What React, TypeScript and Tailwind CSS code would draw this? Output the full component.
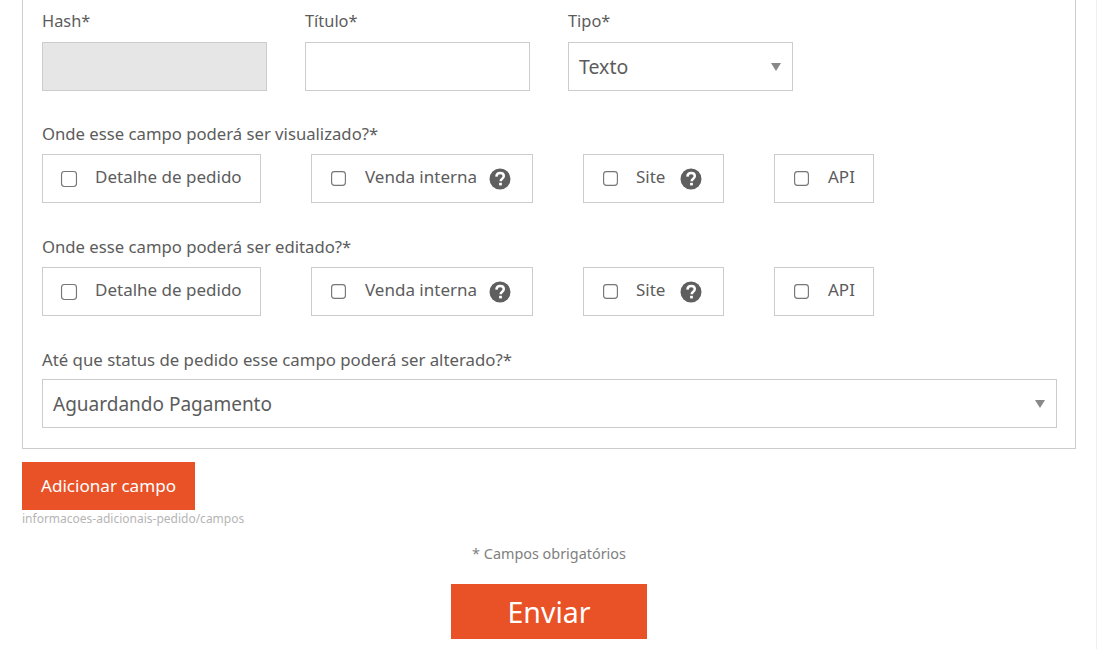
import React from 'react';

const font = { fontFamily: '"Noto Sans", sans-serif' };

function HelpIcon() {
  return (
    <svg viewBox="0 0 22 22" className="w-[22px] h-[22px] shrink-0">
      <circle cx="11" cy="11" r="10.5" fill="#5f5f5f" />
      <path
        d="M7.4 8.6c.1-2.2 1.6-3.6 3.8-3.6 2.1 0 3.6 1.3 3.6 3.1 0 1.4-.8 2.1-1.8 2.8-.8.6-1.2 1-1.2 1.9v.5"
        fill="none"
        stroke="#fff"
        strokeWidth="2.5"
      />
      <rect x="10.1" y="14.8" width="2.8" height="2.6" fill="#fff" />
    </svg>
  );
}

function CheckOption({
  label,
  helpClass,
  className,
  checkClass,
}: {
  label: string;
  helpClass?: string;
  className: string;
  checkClass: string;
}) {
  return (
    <label className={`h-[49px] border border-[#cccccc] flex items-center shrink-0 ${className}`}>
      <input
        type="checkbox"
        className={`appearance-none border border-[#767676] rounded-[3px] bg-white shrink-0 scale-[1.15] ${checkClass}`}
      />
      <span className="pb-[3px] text-[17px] text-[#5c5c5c]">{label}</span>
      {helpClass && <span className={`flex ${helpClass}`}><HelpIcon /></span>}
    </label>
  );
}

function CheckRow({ title }: { title: string }) {
  return (
    <div>
      <p className="text-[16.7px] leading-[24px] text-[#5c5c5c] mb-[8px]">{title}</p>
      <div className="flex">
        <CheckOption
          label="Detalhe de pedido"
          className="w-[219px] pl-[19px]"
          checkClass="w-[14px] h-[14px] mr-[19px]"
        />
        <CheckOption
          label="Venda interna"
          helpClass="ml-[12px]"
          className="w-[222px] ml-[50px] pl-[20px]"
          checkClass="w-[13px] h-[13px] mr-[20px]"
        />
        <CheckOption
          label="Site"
          helpClass="ml-[15px]"
          className="w-[141px] ml-[50px] pl-[20px]"
          checkClass="w-[13px] h-[13px] mr-[19px]"
        />
        <CheckOption
          label="API"
          className="w-[100px] ml-[50px] pl-[20px]"
          checkClass="w-[13px] h-[13px] mr-[20px]"
        />
      </div>
    </div>
  );
}

function Arrow() {
  return <span className="w-0 h-0 border-x-[5px] border-x-transparent border-t-[8px] border-t-[#888]" />;
}

function Field({ label, children }: { label: string; children: React.ReactNode }) {
  return (
    <div className="w-[225px]">
      <p className="text-[16.4px] leading-[24px] text-[#5c5c5c] mb-[9px]">{label}</p>
      {children}
    </div>
  );
}

export default function App() {
  return (
    <div className="min-h-[649px] bg-white relative overflow-hidden" style={font}>
      <div className="pl-[22px] pr-[21px]">
        <div className="border border-t-0 border-[#cccccc] pl-[19px] pr-[18px] pt-[9px] pb-[20px]">
          <div className="flex gap-[38px]">
            <Field label="Hash*">
              <div className="h-[49px] border border-[#cccccc] bg-[#e6e6e6]" />
            </Field>
            <Field label="Título*">
              <input type="text" className="block w-full h-[49px] border border-[#cccccc] bg-white" />
            </Field>
            <Field label="Tipo*">
              <div className="h-[49px] border border-[#cccccc] flex items-center justify-between pl-[10px] pr-[11px] text-[19.5px] text-[#5c5c5c]">
                <span>Texto</span>
                <Arrow />
              </div>
            </Field>
          </div>
          <div className="mt-[31px]">
            <CheckRow title="Onde esse campo poderá ser visualizado?*" />
          </div>
          <div className="mt-[32px]">
            <CheckRow title="Onde esse campo poderá ser editado?*" />
          </div>
          <div className="mt-[32px]">
            <p className="text-[16.8px] leading-[24px] text-[#5c5c5c] mb-[7px]">
              Até que status de pedido esse campo poderá ser alterado?*
            </p>
            <div className="h-[49px] border border-[#cccccc] flex items-center justify-between pl-[10px] pr-[11px] text-[19px] text-[#5c5c5c]">
              <span className="pt-px">Aguardando Pagamento</span>
              <Arrow />
            </div>
          </div>
        </div>
        <button className="block mt-[13px] w-[173px] h-[48px] bg-[#e95126] text-white text-[17.1px]">
          Adicionar campo
        </button>
        <p className="text-[12px] leading-[16px] text-[#b5b5b5] mt-[1px]">informacoes-adicionais-pedido/campos</p>
        <p className="text-center text-[14.4px] leading-[20px] text-[#808080] mt-[17px]">* Campos obrigatórios</p>
        <button className="block mx-auto mt-[20px] w-[196px] h-[55px] pt-px bg-[#e95126] text-white text-[28.5px]">
          Enviar
        </button>
      </div>
      <div className="absolute top-0 right-0 bottom-0 w-px bg-[#eeeeee]" />
    </div>
  );
}
